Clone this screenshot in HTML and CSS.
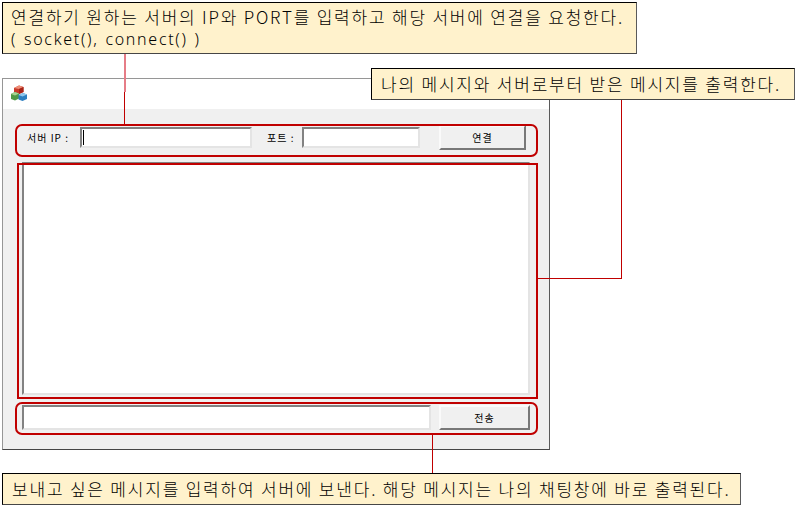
FILE: index.html
```html
<!DOCTYPE html>
<html>
<head>
    <meta charset="utf-8">
    <link rel="stylesheet" href="styles.css">
</head>
<body>
    <div id="canvas">
        <div id="window">
            <div id="title_bar">
                <svg class="app_icon" width="16" height="16" viewBox="0 0 16 16">
                    <path d="M3 3 8 0.500 12.500 2 12.500 7 8 9 3 7.500Z" fill="#c93a2a"/>
                    <path d="M3 3 8 0.500 12.500 2 8 4Z" fill="#ee8f78"/>
                    <path d="M8 4 12.500 2 12.500 7 8 9Z" fill="#a52418"/>
                    <path d="M0 9 4 7 8 8.500 8 13.500 4 15.500 0 14Z" fill="#4f9a46"/>
                    <path d="M0 9 4 7 8 8.500 4 10.500Z" fill="#a5d392"/>
                    <path d="M7.500 10 12 8 16 9.500 16 14 11.500 16 7.500 14.500Z" fill="#2c7fc0"/>
                    <path d="M7.500 10 12 8 16 9.500 11.500 11.500Z" fill="#90c8ec"/>
                </svg>
            </div>
            <div id="client_area">
                <div id="connect_row" class="red_group">
                    <span id="ip_label" class="field_label">서버 IP :</span>
                    <div id="ip_input" class="sunken_box"><div id="caret"></div></div>
                    <span id="port_label" class="field_label">포트 :</span>
                    <div id="port_input" class="sunken_box"></div>
                    <div id="connect_btn" class="raised_btn">연결</div>
                </div>
                <div id="output_group">
                    <div id="output_box" class="sunken_box"></div>
                </div>
                <div id="send_row" class="red_group">
                    <div id="send_input" class="sunken_box"></div>
                    <div id="send_btn" class="raised_btn">전송</div>
                </div>
            </div>
        </div>

        <div id="line_top_fade"></div>
        <div id="line_top" class="red_line"></div>
        <div id="line_right_v" class="red_line"></div>
        <div id="line_right_h" class="red_line"></div>
        <div id="line_bottom" class="red_line"></div>

        <div id="note_connect" class="note">연결하기 원하는 서버의 IP와 PORT를 입력하고 해당 서버에 연결을 요청한다.<br><span class="note_code">( socket(), connect() )</span></div>
        <div id="note_output" class="note">나의 메시지와 서버로부터 받은 메시지를 출력한다.</div>
        <div id="note_send" class="note">보내고 싶은 메시지를 입력하여 서버에 보낸다. 해당 메시지는 나의 채팅창에 바로 출력된다.</div>
    </div>
</body>
</html>
```

FILE: styles.css
```css
html, body {
    margin: 0;
    padding: 0;
    background-color: white;
}
#canvas {
    position: relative;
    width: 796px;
    height: 505px;
    overflow: hidden;
    font-family: "Noto Sans CJK KR", "DejaVu Sans", sans-serif;
}
#window {
    position: absolute;
    left: 2px;
    top: 78px;
    width: 546px;
    height: 370px;
    border: 1px solid rgb(150,150,150);
    border-right-color: rgb(90,90,90);
    border-bottom-color: rgb(70,70,70);
    display: flex;
    flex-direction: column;
}
#title_bar {
    height: 30px;
    background-color: white;
    padding-left: 8px;
    display: flex;
    align-items: center;
}
.app_icon {
    display: block;
    margin-top: -2px;
}
#client_area {
    flex-grow: 1;
    background-color: rgb(240,240,240);
    padding: 15px 11px 0 12px;
}
.red_group {
    position: relative;
    display: flex;
    box-sizing: border-box;
    width: 523px;
    height: 33px;
}
.red_group::after, #output_group::after {
    content: "";
    position: absolute;
    top: 0;
    left: 0;
    right: 0;
    bottom: 0;
    border: 2px solid rgb(192,0,0);
}
.red_group::after {
    border-radius: 7px;
}
.sunken_box {
    box-sizing: border-box;
    background-color: white;
    border: 2px solid;
    border-color: rgb(130,130,130) rgb(228,228,228) rgb(228,228,228) rgb(130,130,130);
}
.raised_btn {
    box-sizing: border-box;
    background-color: rgb(240,240,240);
    border: 2px solid;
    border-color: rgb(250,250,250) rgb(120,120,120) rgb(120,120,120) rgb(250,250,250);
    font-size: 10px;
    letter-spacing: 1px;
    color: black;
    display: flex;
    align-items: center;
    justify-content: center;
}
.field_label {
    font-size: 10px;
    letter-spacing: 1px;
    color: black;
    line-height: 22px;
}
#connect_row {
    padding: 3px 0 0 12px;
    align-items: flex-start;
}
#ip_label {
    width: 53px;
}
#ip_input {
    width: 172px;
    height: 21px;
}
#caret {
    width: 1px;
    height: 15px;
    margin: 1px 0 0 1px;
    background-color: black;
}
#port_label {
    width: 35px;
    margin-left: 15px;
}
#port_input {
    width: 118px;
    height: 21px;
}
#connect_btn {
    width: 87px;
    height: 25px;
    margin: -2px 0 0 19px;
}
#output_group {
    position: relative;
    box-sizing: border-box;
    width: 521px;
    height: 236px;
    margin: 6px 0 0 2px;
    padding: 1px 0 0 5px;
}
#output_box {
    width: 508px;
    height: 233px;
    margin-top: -2px;
}
#send_row {
    margin-top: 3px;
    padding: 3px 0 0 7px;
    align-items: flex-start;
}
#send_input {
    width: 409px;
    height: 25px;
}
#send_btn {
    width: 91px;
    height: 25px;
    margin-left: 8px;
}
.red_line {
    position: absolute;
    background-color: rgb(192,0,0);
}
#line_top_fade {
    position: absolute;
    left: 124px;
    top: 54px;
    width: 2px;
    height: 38px;
    background-color: rgb(230,125,135);
}
#line_top {
    left: 124px;
    top: 92px;
    width: 1px;
    height: 32px;
}
#line_right_v {
    left: 621px;
    top: 99px;
    width: 1px;
    height: 180px;
}
#line_right_h {
    left: 538px;
    top: 278px;
    width: 84px;
    height: 1px;
}
#line_bottom {
    left: 432px;
    top: 434px;
    width: 1px;
    height: 39px;
}
.note {
    position: absolute;
    box-sizing: border-box;
    background-color: rgb(255,242,204);
    border: 1px solid black;
    border-right-color: rgb(90,90,90);
    border-bottom-color: rgb(70,70,70);
    color: black;
    font-size: 17px;
    font-weight: 300;
    line-height: 21px;
    white-space: nowrap;
    letter-spacing: 1.8px;
}
.note_code {
    font-family: "Noto Sans", sans-serif;
    font-size: 16px;
    letter-spacing: 1.7px;
    word-spacing: 1px;
}
#note_connect {
    left: 2px;
    top: 2px;
    width: 635px;
    height: 52px;
    padding: 3px 0 0 8px;
}
#note_output {
    left: 371px;
    top: 68px;
    width: 424px;
    height: 32px;
    padding: 4px 0 0 9px;
}
#note_send {
    left: 2px;
    top: 473px;
    width: 739px;
    height: 32px;
    padding: 4px 0 0 9px;
}
```
